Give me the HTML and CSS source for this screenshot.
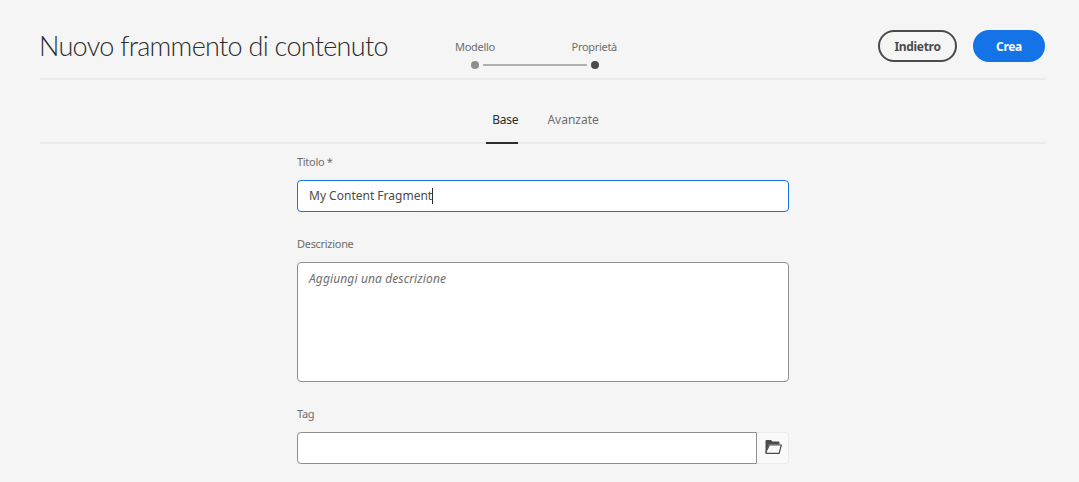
FILE: index.html
```html
<!DOCTYPE html>
<html lang="it">
<head>
<meta charset="utf-8">
<title>Nuovo frammento di contenuto</title>
<link rel="stylesheet" href="styles.css">
</head>
<body>
<div class="page">
  <header class="header">
    <h1 class="title">Nuovo frammento di contenuto</h1>
    <div class="stepper">
      <div class="step-labels"><span>Modello</span><span>Proprietà</span></div>
      <div class="step-track">
        <span class="dot dot-done"></span>
        <span class="track-line"></span>
        <span class="dot dot-current"></span>
      </div>
    </div>
    <div class="actions">
      <button class="btn btn-back">Indietro</button>
      <button class="btn btn-create">Crea</button>
    </div>
  </header>
  <nav class="tabs">
    <a class="tab tab-active">Base</a>
    <a class="tab">Avanzate</a>
  </nav>
  <form class="form">
    <label class="label label-first">Titolo *</label>
    <div class="input input-focus"><span>My Content Fragment</span><span class="caret"></span></div>
    <label class="label label-desc">Descrizione</label>
    <div class="textarea">Aggiungi una descrizione</div>
    <label class="label label-tag">Tag</label>
    <div class="tag-row">
      <div class="input tag-input"></div>
      <button type="button" class="browse" aria-label="Sfoglia">
        <svg width="18" height="16" viewBox="-0.5 0 18 16"><path class="folder" d="M1 1a1 1 0 0 1 1-1h4.5l1.5 1.5h6a1 1 0 0 1 1 1V4.5H4.5L2.2 10V13.5H1z"/><path class="folder-open" d="M4.9 5H16.9L14.6 13.4H1.7L1.7 11.5z"/></svg>
      </button>
    </div>
  </form>
</div>
</body>
</html>
```
FILE: styles.css
```css
html, body { margin: 0; padding: 0; }
body {
  background: #f5f5f5;
  font-family: "Noto Sans", "Open Sans", sans-serif;
  color: #4b4b4b;
  height: 482px;
  overflow: hidden;
}
.page { padding: 0 34px 0 40px; }
.header {
  display: flex;
  align-items: flex-start;
  height: 78px;
  border-bottom: 2px solid #eaeaea;
  box-sizing: content-box;
}
.title {
  margin: 27px 0 0 -1px;
  font-family: "Lato", sans-serif;
  font-weight: 300;
  font-size: 27px;
  letter-spacing: -0.7px;
  line-height: 38px;
  color: #2c2c2c;
  width: 415px;
  white-space: nowrap;
}
.stepper { width: 164px; margin-top: 39px; }
.step-labels {
  display: flex;
  justify-content: space-between;
  padding: 0 1px;
  font-size: 11px;
  letter-spacing: -0.3px;
  line-height: 16px;
  color: #6e6e6e;
}
.step-track {
  display: flex;
  align-items: center;
  margin: 6px 19px 0 17px;
  gap: 4px;
}
.dot { width: 8px; height: 8px; border-radius: 50%; flex: none; }
.dot-done { background: #8e8e8e; }
.dot-current { background: #4b4b4b; }
.track-line { flex: 1; height: 2px; background: #b0b0b0; }
.actions { margin-left: auto; display: flex; gap: 16px; margin-top: 30px; }
.btn {
  height: 32px;
  border-radius: 16px;
  font-family: inherit;
  font-size: 12px;
  letter-spacing: -0.3px;
  font-weight: 700;
  box-sizing: border-box;
  padding: 0;
}
.btn-back { width: 79px; background: transparent; border: 2px solid #4b4b4b; color: #4b4b4b; }
.btn-create { width: 72px; background: #1473e6; border: 2px solid #1473e6; color: #fff; }
.tabs {
  display: flex;
  justify-content: center;
  gap: 29px;
  height: 62px;
  border-bottom: 2px solid #eaeaea;
  box-sizing: content-box;
}
.tab {
  padding: 30px 0 0;
  height: 32px;
  font-size: 12px;
  line-height: 20px;
  color: #6e6e6e;
  border-bottom: 2px solid transparent;
  margin-bottom: -2px;
}
.tab-active { color: #2c2c2c; border-bottom-color: #2c2c2c; padding-left: 6px; letter-spacing: -0.2px; }
.form { width: 492px; margin-left: 257px; }
.label { display: block; font-size: 11px; letter-spacing: -0.3px; line-height: 16px; color: #6e6e6e; }
.label-first { margin-top: 10px; margin-bottom: 10px; }
.label-desc { margin-top: 24px; margin-bottom: 10px; }
.label-tag { margin-top: 24px; margin-bottom: 10px; }
.input {
  box-sizing: border-box;
  height: 32px;
  background: #fff;
  border: 1px solid #8e8e8e;
  border-radius: 4px;
  font-size: 12px;
  line-height: 30px;
  padding: 0 11px;
  color: #4b4b4b;
  display: flex;
  align-items: center;
}
.input-focus { border-color: #1473e6; }
.caret { width: 1px; height: 16px; background: #2c2c2c; }
.textarea {
  box-sizing: border-box;
  height: 120px;
  background: #fff;
  border: 1px solid #8e8e8e;
  border-radius: 4px;
  padding: 7px 11px;
  font-size: 12px;
  letter-spacing: 0.12px;
  line-height: 18px;
  font-style: italic;
  color: #6e6e6e;
}
.tag-row { display: flex; }
.tag-input { flex: 1; border-radius: 4px 0 0 4px; }
.browse {
  box-sizing: border-box;
  width: 32px;
  height: 32px;
  padding: 0;
  border: 1px solid #eaeaea;
  border-left: 0;
  border-radius: 0 4px 4px 0;
  background: #fafafa;
  display: flex;
  align-items: center;
  justify-content: center;
}
.folder { fill: #4b4b4b; }
.folder-open { fill: #fafafa; stroke: #4b4b4b; stroke-width: 1.2; }
```
